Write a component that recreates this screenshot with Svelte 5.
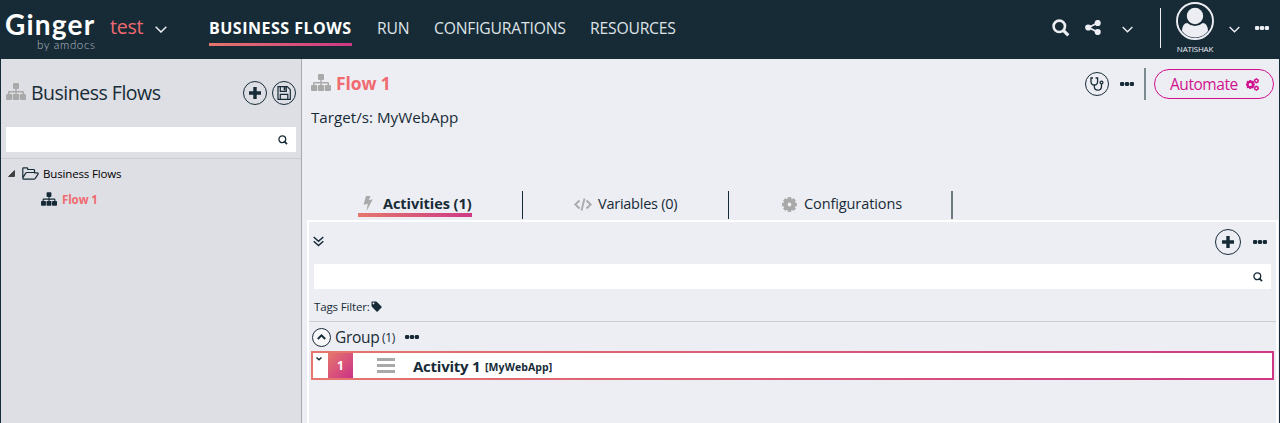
<script>
  const nav = [
    { label: 'BUSINESS FLOWS', width: 143, active: true },
    { label: 'RUN', width: 32 },
    { label: 'CONFIGURATIONS', width: 131 },
    { label: 'RESOURCES', width: 86 }
  ];
  const gearTeeth = [0, 45, 90, 135, 180, 225, 270, 315];
</script>

{#snippet sitemap(w, h, color)}
  <svg width={w} height={h} viewBox="0 0 20 17" fill={color}>
    <rect x="7" y="0" width="6" height="6" rx="1" />
    <path d="M9.3 5h1.4v3H17q1 0 1 1v3h-1.4V9.4h-5.9V12H9.300V9.400H3.400V12H2V9q0-1 1-1h6.300z" />
    <rect x="0" y="11" width="6.200" height="6" rx="1" />
    <rect x="6.900" y="11" width="6.200" height="6" rx="1" />
    <rect x="13.800" y="11" width="6.200" height="6" rx="1" />
  </svg>
{/snippet}

{#snippet dots(color)}
  <svg width="14" height="4" viewBox="0 0 14 4" fill={color}>
    <rect x="0" y="0" width="4.200" height="4" rx="1.300" />
    <rect x="4.900" y="0" width="4.200" height="4" rx="1.300" />
    <rect x="9.800" y="0" width="4.200" height="4" rx="1.300" />
  </svg>
{/snippet}

{#snippet chevron(w, h)}
  <svg width={w} height={h} viewBox="0 0 12 7" fill="none" stroke="#edeef3" stroke-width="1.500"><path d="M.7.8 6 6 11.300.8" /></svg>
{/snippet}

{#snippet lens()}
  <svg width="10" height="10" viewBox="0 0 10 10" fill="none" stroke="#172b37"><circle cx="4.300" cy="4.300" r="3.400" stroke-width="1.300" /><path d="M6 6 9 9.200" stroke-width="1.700" /></svg>
{/snippet}

{#snippet plus()}
  <svg width="12" height="12" viewBox="0 0 12 12" fill="#172b37"><path d="M4.300 0h3.400v4.300H12v3.400H7.700V12H4.300V7.700H0V4.300h4.300z" /></svg>
{/snippet}

{#snippet gear(cx, cy, r, hole, color)}
  <g transform="translate({cx} {cy})">
    {#each gearTeeth as a}
      <rect x={-r * 0.24} y={-r} width={r * 0.48} height={r * 0.5} fill={color} transform="rotate({a})" />
    {/each}
    <circle r={(r * 0.82 + hole) / 2} fill="none" stroke={color} stroke-width={r * 0.82 - hole} />
  </g>
{/snippet}

<div class="app">
  <header>
    <div class="logo">
      <span class="ginger">Ginger</span>
      <span class="by">by amdocs</span>
    </div>
    <span class="solution">test</span>
    <span class="chev1">{@render chevron(12, 7)}</span>
    <nav>
      {#each nav as item}
        <a class:active={item.active} style="width:{item.width}px"><span>{item.label}</span></a>
      {/each}
    </nav>
    <div class="tools">
      <svg class="search" width="18" height="18" viewBox="0 0 18 18" fill="none" stroke="#edeef3"><circle cx="7.300" cy="7.300" r="5.700" stroke-width="2.600" /><path d="m11.300 11.300 5 5" stroke-width="3.200" /></svg>
      <svg class="share" width="16" height="15" viewBox="0 0 16 15" fill="#edeef3" stroke="#edeef3" stroke-width="1.800"><path d="M12.500 3 3.500 7.500l9 4.500" fill="none" /><circle cx="12.700" cy="3" r="2.200" /><circle cx="3.200" cy="7.500" r="2.200" /><circle cx="12.700" cy="12" r="2.200" /></svg>
      <span class="chev2">{@render chevron(11, 7)}</span>
      <i class="divider"></i>
      <div class="user">
        <svg width="38" height="38" viewBox="0 0 38 38">
          <circle cx="19" cy="19" r="18" fill="none" stroke="#edeef3" stroke-width="1.900" />
          <circle cx="19" cy="14" r="8.200" fill="#edeef3" />
          <path d="M6 29Q6.500 21 11.300 21q3.300 3 7.700 3t7.700-3Q31.500 21 32 29 27 35.500 19 35.500T6 29z" fill="#edeef3" />
        </svg>
        <span>NATISHAK</span>
      </div>
      <span class="chev3">{@render chevron(11, 7)}</span>
      <span class="more">{@render dots('#edeef3')}</span>
    </div>
  </header>

  <div class="body">
    <aside>
      <div class="side-head">
        <span class="lift">{@render sitemap(20, 17, '#a9a9a9')}</span>
        <h1><span>Business Flows</span></h1>
        <button class="round">{@render plus()}</button>
        <button class="round">
          <svg width="14" height="14" viewBox="0 0 14 14" fill="none" stroke="#172b37" stroke-width="1.200"><path d="M1 .7h9.300l3 3V13.300H1zM3.300.7v4.600h6V.7M3.300 13V8.300h7.500V13" /><path d="M7.600 1v3.300" stroke-width="1.800" /></svg>
        </button>
      </div>
      <div class="field">{@render lens()}</div>
      <div class="tree">
        <div class="node root">
          <svg width="7" height="7" viewBox="0 0 7 7"><path d="M6.500.5v6H.5z" fill="#404040" stroke="#262626" stroke-width=".7" /></svg>
          <svg width="17" height="13" viewBox="0 0 17 13" fill="none" stroke="#172b37" stroke-width="1.200" stroke-linejoin="round"><path d="M.8 11.500V1.600Q.8.8 1.600.8h3.300q.8 0 .8.800v.900h6q.8 0 .8.800v2.200H4.900q-.7 0-1.200.6L.9 10.800v.6q0 .8.800.8h10.200q.7 0 1.200-.6l2.800-4.200q.9-1.600-.7-1.600h-3" /></svg>
          <span class="t">Business Flows</span>
        </div>
        <div class="node leaf">
          {@render sitemap(16, 14, '#172b37')}
          <span class="t">Flow 1</span>
        </div>
      </div>
    </aside>

    <main>
      <div class="title-row">
        <span class="lift">{@render sitemap(20, 17, '#a9a9a9')}</span>
        <h2>Flow 1</h2>
        <button class="round steth">
          <svg width="14" height="14" viewBox="0 0 14 14" fill="none" stroke="#172b37" stroke-width="1.300"><path d="M3 1H1v3.500q0 3.500 3.300 3.500t3.300-3.500V1h-2M4.300 8v1.500q0 3.700 3.500 3.700t3.700-3.700V7" /><circle cx="11.500" cy="5.500" r="1.400" /></svg>
        </button>
        <span class="title-dots">{@render dots('#172b37')}</span>
        <i class="bar"></i>
        <button class="automate"><span>Automate</span>
          <svg width="13" height="13" viewBox="0 0 13 13">
            {@render gear(4.3, 6.5, 4.5, 1.6, '#d0128f')}
            {@render gear(10.4, 2.8, 2.6, 1, '#d0128f')}
            {@render gear(10.4, 10.2, 2.6, 1, '#d0128f')}
          </svg>
        </button>
      </div>
      <p class="target">Target/s: MyWebApp</p>

      <div class="tabs">
        <div class="tab first">
          <div class="selected">
            <svg width="10" height="15" viewBox="0 0 10 15" fill="#a9a9a9"><path d="M3 0h4.500L5.800 4.200 9.800 3.300 3.500 15 4.800 7.800.5 8.800z" /></svg>
            <span>Activities (1)</span>
          </div>
        </div>
        <div class="tab second">
          <svg width="18" height="13" viewBox="0 0 18 13" fill="none" stroke="#a9a9a9" stroke-width="1.800"><path d="M5.500 2.500 1.300 6.500l4.200 4M12.500 2.500l4.200 4-4.200 4M10.500.5 7.500 12.500" /></svg>
          <span>Variables (0)</span>
        </div>
        <div class="tab third">
          <svg width="15" height="15" viewBox="0 0 15 15">{@render gear(7.5, 7.5, 7.4, 1.9, '#a9a9a9')}</svg>
          <span>Configurations</span>
        </div>
      </div>

      <section>
        <div class="bar-row">
          <svg width="11" height="11" viewBox="0 0 11 11" fill="none" stroke="#172b37" stroke-width="1.500"><path d="m.7 1 4.800 4.300L10.300 1M.7 5.300l4.800 4.300 4.800-4.300" /></svg>
          <button class="round large">{@render plus()}</button>
          {@render dots('#172b37')}
        </div>
        <div class="field wide">{@render lens()}</div>
        <div class="tags">
          <span>Tags Filter:</span>
          <svg width="11" height="11" viewBox="0 0 11 11"><path fill="#172b37" fill-rule="evenodd" d="M.5 1.300Q.5.500 1.300.500H5q.6 0 1 .4l4.500 4.500q.6.600 0 1.200L6.700 10.400q-.6.600-1.200 0L.9 5.800Q.5 5.400.5 4.800zM2.500 1.500a.9.900 0 1 0 .01 0z" /></svg>
        </div>
        <div class="group">
          <span class="up"><svg width="9" height="6" viewBox="0 0 9 6" fill="none" stroke="#172b37" stroke-width="2"><path d="m.8 5 3.700-3.600L8.200 5" /></svg></span>
          <span class="gname">Group</span><span class="gcount">(1)</span>
          {@render dots('#172b37')}
        </div>
        <div class="activity">
          <div class="inner">
            <svg class="mini" width="6" height="4" viewBox="0 0 6 4" fill="none" stroke="#172b37" stroke-width="1.400"><path d="m.5.500 2.500 2.300L5.500.500" /></svg>
            <b class="num">1</b>
            <span class="grip"><i></i><i></i><i></i></span>
            <b class="aname">Activity 1</b>
            <b class="aapp">[MyWebApp]</b>
          </div>
        </div>
      </section>
    </main>
  </div>
</div>

<style>
  :global(body) { margin: 0; }
  .app { width: 1280px; height: 423px; box-sizing: border-box; background: #172b37; font-family: "Open Sans", "Noto Sans", sans-serif; color: #172b37; overflow: hidden; }
  .app * { box-sizing: border-box; }
  svg { display: block; flex: none; }
  span, b, h1, h2, p { white-space: nowrap; flex: none; }
  button { padding: 0; font: inherit; color: inherit; background: none; flex: none; text-align: left; }

  header { height: 59px; display: flex; align-items: flex-start; }
  .logo { width: 110px; padding-left: 5px; display: flex; flex-direction: column; font-family: Lato, sans-serif; color: #fff; }
  .ginger { font-size: 28px; font-weight: 700; line-height: 30px; margin-top: 9px; letter-spacing: 1.200px; }
  .by { font-size: 11.500px; font-weight: 300; line-height: 12px; color: #b4bcc2; padding-left: 32px; letter-spacing: .65px; }
  .solution { width: 45px; line-height: 54px; font-size: 19.500px; letter-spacing: -.2px; color: #f06a70; }
  .chev1 { margin-top: 26px; width: 54px; }
  nav { display: flex; gap: 25px; font-size: 15.700px; color: #dfe3e6; }
  nav a { height: 46px; line-height: 57px; white-space: nowrap; border-bottom: 3px solid transparent; letter-spacing: -.2px; }
  nav a.active { font-size: 16px; font-weight: 700; color: #fff; border-image: linear-gradient(90deg, #e6776c, #ce3885) 1; letter-spacing: .5px; }
  .tools { margin-left: auto; display: flex; align-items: flex-start; }
  .search { margin: 19px 15px 0 0; }
  .share { margin: 20px 21px 0 0; }
  .chev2 { margin: 26px 27px 0 0; }
  .divider { width: 1px; height: 40px; margin-top: 8px; background: #edeef3; }
  .user { width: 68px; display: flex; flex-direction: column; align-items: center; padding-top: 2px; color: #edeef3; font-size: 8px; }
  .user span { line-height: 17px; letter-spacing: -.2px; }
  .chev3 { margin: 26px 15px 0 0; }
  .more { margin: 26px 11px 0 0; }

  .body { display: flex; height: 364px; padding: 0 1px; }
  aside { width: 301px; background: #dedfe4; border-right: 1px solid #a6a8ac; }
  .side-head { height: 68px; display: flex; align-items: center; padding: 0 5px; gap: 5px; }
  .lift { padding-bottom: 3px; }
  h1 { margin: 0; width: 207px; font-size: 19.500px; font-weight: 400; line-height: 30px; letter-spacing: -.5px; }
  .round { width: 24px; height: 24px; border: 1px solid #172b37; border-radius: 50%; display: flex; align-items: center; justify-content: center; }
  .field { height: 25px; margin: 0 5px; background: #fff; display: flex; align-items: center; justify-content: flex-end; padding-right: 8px; }
  .tree { margin-top: 6px; border-top: 1px solid #cccccf; }
  .node { display: flex; align-items: center; height: 26px; font-size: 11.500px; }
  .root { padding: 1px 0 0 7px; height: 28px; gap: 7px; color: #000; }
  .root .t { margin-left: -3px; letter-spacing: -.15px; }
  .leaf { padding: 0 0 2px 40px; gap: 5px; color: #f06a70; font-weight: 700; }
  .leaf .t { letter-spacing: -.1px; }

  main { width: 977px; background: #edeef3; }
  .title-row { height: 50px; padding: 9px 5px 9px 9px; display: flex; align-items: center; }
  h2 { margin: -2px 0 0 5px; width: 749px; font-size: 17.500px; line-height: 30px; color: #f06a70; letter-spacing: -.1px; }
  .title-dots { margin-left: 11px; width: 24px; }
  .bar { width: 2px; height: 32px; background: #7d8a91; margin-right: 8px; flex: none; }
  .automate { width: 120px; height: 30px; border: 1px solid #d0128f; border-radius: 15px; display: flex; align-items: center; justify-content: flex-start; padding-left: 15px; color: #d0128f; font-size: 15.500px; }
  .automate span { width: 76px; letter-spacing: -.5px; }
  .automate span { letter-spacing: -.7px; letter-spacing: -.45px; }
  .target { margin: 0 0 0 9px; height: 82px; font-size: 15.200px; line-height: 17px; letter-spacing: 0; }

  .tabs { display: flex; height: 28px; font-size: 14.500px; line-height: 26px; }
  .tab { border-right: 1px solid #172b37; display: flex; align-items: center; padding-bottom: 2px; }
  .first { width: 221px; padding-left: 56px; align-items: flex-start; }
  .second { width: 206px; padding-left: 51px; gap: 6px; }
  .third { width: 224px; padding-left: 53px; gap: 7px; border-right: 2px solid #6d7a82; }
  .selected { width: 114px; height: 26px; display: flex; flex: none; align-items: center; gap: 10px; padding: 3px 0 0 5px; font-weight: 700; line-height: 20px; border-bottom: 4px solid; border-image: linear-gradient(90deg, #e6776c, #ce3885) 1; letter-spacing: -.05px; }
  .second span { letter-spacing: -.25px; }
  .third span { letter-spacing: -.1px; }

  section { margin: 1px 1px 0 5px; height: 203px; border: 2px solid #fff; border-bottom: 0; }
  .bar-row { height: 42px; display: flex; align-items: center; padding: 0 9px 3px 4px; }
  .large { width: 26px; height: 26px; margin: 0 12px 0 auto; }
  .wide { padding-right: 8px; }
  .tags { height: 33px; display: flex; align-items: center; padding: 3px 0 0 5px; border-bottom: 1px solid #cccdd2; font-size: 11.500px; }
  .tags span { width: 57px; letter-spacing: -.15px; }
  .group { height: 29px; display: flex; align-items: center; padding: 1px 0 0 3px; }
  .up { width: 19px; height: 19px; border: 1px solid #172b37; border-radius: 50%; background: #f8f8fa; display: flex; align-items: center; justify-content: center; }
  .gname { margin-left: 4px; width: 47px; font-size: 15.500px; letter-spacing: -.3px; }
  .gcount { width: 23px; font-size: 12px; letter-spacing: -.3px; }
  .activity { margin: 0 2px; height: 29px; padding: 2px; background: linear-gradient(90deg, #e6776c, #ce3885); }
  .inner { height: 25px; background: #fff; display: flex; align-items: center; }
  .mini { margin: 4px 6px 0 3px; align-self: flex-start; }
  .num { width: 25px; height: 25px; line-height: 25px; text-align: center; font-size: 12px; color: #fff; background: linear-gradient(135deg, #e6776c, #cb3287); }
  .grip { width: 18px; height: 15px; margin: 0 18px 0 24px; display: flex; flex-direction: column; justify-content: space-between; }
  .grip i { height: 3px; background: #a9a9a9; }
  .aname { width: 72px; font-size: 15px; letter-spacing: -.25px; }
  .aapp { font-size: 10.500px; padding-top: 2px; letter-spacing: .1px; }
</style>
